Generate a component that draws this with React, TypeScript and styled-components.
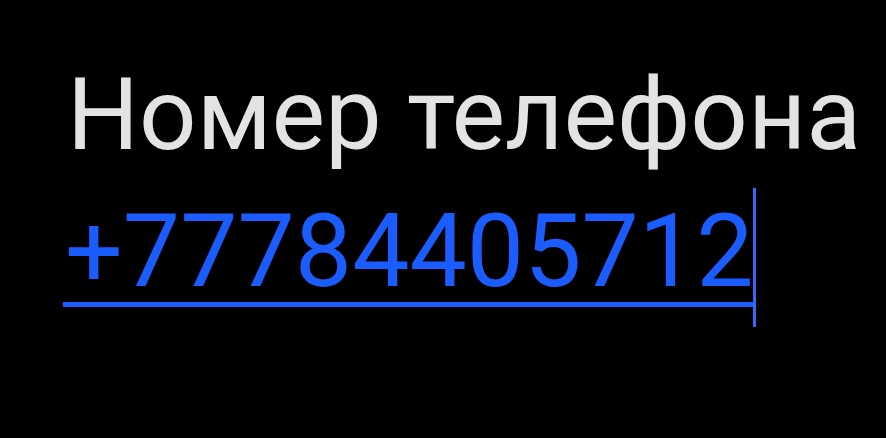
import React from 'react';
import styled, { createGlobalStyle } from 'styled-components';

const GlobalStyle = createGlobalStyle`
  html, body {
    margin: 0;
    padding: 0;
    background: #000;
  }
  body {
    font-family: Roboto, "Noto Sans", sans-serif;
  }
`;

const Screen = styled.div`
  width: 886px;
  height: 438px;
  background: #000;
  box-sizing: border-box;
  padding: 64px 0 0 63px;
  display: flex;
  flex-direction: column;
`;

const Label = styled.div`
  font-size: 101px;
  line-height: 1;
  color: #e3e3e3;
  padding-left: 4px;
  white-space: nowrap;
`;

const FieldRow = styled.div`
  display: flex;
  align-items: flex-start;
  margin-top: 35px;
`;

const Value = styled.div`
  font-size: 102px;
  line-height: 1;
  height: 102px;
  color: #1b5cff;
  padding-left: 2px;
  border-bottom: 5px solid #1b5cff;
  white-space: nowrap;
`;

const Caret = styled.div`
  width: 3px;
  height: 139px;
  margin-top: -12px;
  background: #3168ff;
`;

export default function App() {
  return (
    <>
      <GlobalStyle />
      <Screen>
        <Label>Номер телефона</Label>
        <FieldRow>
          <Value>+77784405712</Value>
          <Caret />
        </FieldRow>
      </Screen>
    </>
  );
}
